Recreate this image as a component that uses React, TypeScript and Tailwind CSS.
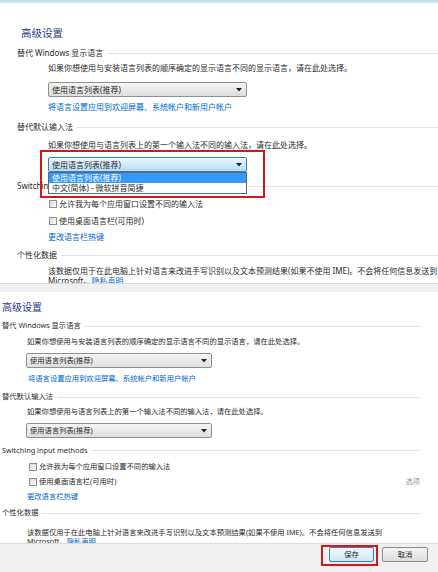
import React from "react";

function Arrow() {
  return (
    <svg width="6" height="4" viewBox="0 0 6 4">
      <path d="M0 0h6L3 3.5z" fill="#222" />
    </svg>
  );
}

function Select({ focused, wide }: { focused?: boolean; wide?: boolean }) {
  return (
    <div
      className={`flex h-[15px] items-center justify-between rounded-[2px] border pl-[3px] pr-[4px] ${
        wide ? "w-[199px]" : "w-[186px]"
      } ${
        focused
          ? "border-[#3c7fb1] bg-linear-to-b from-[#eef8fe] to-[#b4ddf5]"
          : "border-[#8e8f8f] bg-linear-to-b from-[#f5f5f5] to-[#dedede]"
      }`}
    >
      <span>使用语言列表(推荐)</span>
      <Arrow />
    </div>
  );
}

function Rule({ label, className, end }: { label: string; className: string; end?: string }) {
  return (
    <div className={`flex items-center ${className}`}>
      <span className="whitespace-nowrap">{label}</span>
      <div className={`ml-[4px] h-px flex-1 bg-[#e2e2e2] ${end ?? ""}`} />
    </div>
  );
}

function Box() {
  return <span className="mr-[2px] inline-block h-[8px] w-[8px] border border-[#8f8f8f] bg-linear-to-br from-[#dcdcdc] to-[#fafafa]" />;
}

export default function App() {
  return (
    <div className="w-[438px] h-[572px] overflow-hidden bg-white font-['Noto_Sans','Noto_Sans_CJK_SC',sans-serif] text-[#2b2b2b]">
      {/* first capture */}
      <div className="relative h-[283px] overflow-hidden text-[8px] leading-none">
        <div className="h-[3px] bg-[#c6e4f0]" />
        <div className="pl-[17px]">
          <div className="mt-[19px] flex h-[22px] items-center pl-[4px] text-[10.5px] text-[#1e3c87]">高级设置</div>
          <Rule label="替代 Windows 显示语言" className="h-[18px]" />
          <div className="flex h-[11px] items-center pl-[31px]">
            如果你想使用与安装语言列表的顺序确定的显示语言不同的显示语言，请在此处选择。
          </div>
          <div className="mt-[9px] pl-[31px]">
            <Select wide />
          </div>
          <div className="flex h-[20px] items-center pl-[31px] text-[#0066cc]">
            将语言设置应用到欢迎屏幕、系统帐户和新用户帐户
          </div>
          <Rule label="替代默认输入法" className="h-[20px]" />
          <div className="flex h-[16px] items-center pl-[31px]">
            如果你想使用与语言列表上的第一个输入法不同的输入法，请在此处选择。
          </div>
          <div className="mt-[4px] pl-[31px]">
            <Select wide focused />
          </div>
          <Rule label="Switching input methods" className="mt-[4px] h-[20px]" />
          <div className="flex h-[16px] items-center pl-[32px]">
            <Box />
            允许我为每个应用窗口设置不同的输入法
          </div>
          <div className="flex h-[18px] items-center pl-[32px]">
            <Box />
            使用桌面语言栏(可用时)
          </div>
          <div className="flex h-[14px] items-center pl-[31px] text-[#0066cc]">更改语言栏热键</div>
          <Rule label="个性化数据" className="h-[22px]" />
          <div className="pl-[31px] leading-[9.5px]">
            <div className="whitespace-nowrap">
              该数据仅用于在此电脑上针对语言来改进手写识别以及文本预测结果(如果不使用 IME)。不会将任何信息发送到
            </div>
            <div>
              Microsoft。<span className="text-[#0066cc]">隐私声明</span>
            </div>
          </div>
        </div>

        {/* open list */}
        <div className="absolute left-[48px] top-[172px] w-[199px] border border-[#646464] bg-white">
          <div className="flex h-[10px] items-center bg-[#3399ff] pl-[3px] text-white">使用语言列表(推荐)</div>
          <div className="flex h-[10px] items-center pl-[3px]">中文(简体) - 微软拼音简捷</div>
        </div>
        <div className="absolute left-[40px] top-[150px] h-[48px] w-[225px] border-2 border-[#d6151c]" />
      </div>
      <div className="h-[9px] border-t border-[#d8d8d8] bg-[#f0f0f0]" />

      {/* second capture */}
      <div className="h-[251px] overflow-hidden pl-[2px] text-[7.3px] leading-none">
        <div className="mt-[5px] flex h-[20px] items-center text-[10px] text-[#1e3c87]">高级设置</div>
        <Rule label="替代 Windows 显示语言" className="h-[18px] pr-[18px]" />
        <div className="flex h-[14px] items-center pl-[25px]">
          如果你想使用与安装语言列表的顺序确定的显示语言不同的显示语言，请在此处选择。
        </div>
        <div className="mt-[4px] pl-[24px]">
          <Select />
        </div>
        <div className="flex h-[22px] items-center pl-[26px] text-[#0066cc]">
          将语言设置应用到欢迎屏幕、系统帐户和新用户帐户
        </div>
        <Rule label="替代默认输入法" className="h-[14px] pr-[18px]" />
        <div className="flex h-[16px] items-center pl-[25px]">
          如果你想使用与语言列表上的第一个输入法不同的输入法，请在此处选择。
        </div>
        <div className="mt-[3px] pl-[24px]">
          <Select />
        </div>
        <Rule label="Switching input methods" className="mt-[4px] h-[17px] pr-[18px]" />
        <div className="flex h-[15px] items-center pl-[27px]">
          <Box />
          允许我为每个应用窗口设置不同的输入法
        </div>
        <div className="flex h-[16px] items-center justify-between pl-[27px] pr-[18px]">
          <div className="flex items-center">
            <Box />
            使用桌面语言栏(可用时)
          </div>
          <span className="text-[#9a9a9a]">选项</span>
        </div>
        <div className="flex h-[14px] items-center pl-[25px] text-[#0066cc]">更改语言栏热键</div>
        <Rule label="个性化数据" className="h-[18px] pr-[18px]" />
        <div className="mt-[6px] pl-[25px] leading-[8.5px]">
          <div className="whitespace-nowrap">
            该数据仅用于在此电脑上针对语言来改进手写识别以及文本预测结果(如果不使用 IME)。不会将任何信息发送到
          </div>
          <div>
            Microsoft。<span className="text-[#0066cc]">隐私声明</span>
          </div>
        </div>
      </div>

      {/* footer */}
      <div className="flex h-[29px] justify-end gap-[8px] border-t border-[#dcdcdc] bg-[#f0f0f0] pr-[10px] pt-[3px] text-[7.3px] leading-none">
        <div className="relative">
          <button className="flex h-[15px] w-[45px] items-center justify-center rounded-[2px] border border-[#3c7fb1] bg-linear-to-b from-[#eef7fd] to-[#cfe7f8]">
            保存
          </button>
          <div className="absolute -left-[8px] -top-[2px] h-[21px] w-[57px] border-2 border-[#d6151c]" />
        </div>
        <button className="flex h-[15px] w-[46px] items-center justify-center rounded-[2px] border border-[#8a8a8a] bg-linear-to-b from-[#f6f6f6] to-[#dcdcdc]">
          取消
        </button>
      </div>
    </div>
  );
}
